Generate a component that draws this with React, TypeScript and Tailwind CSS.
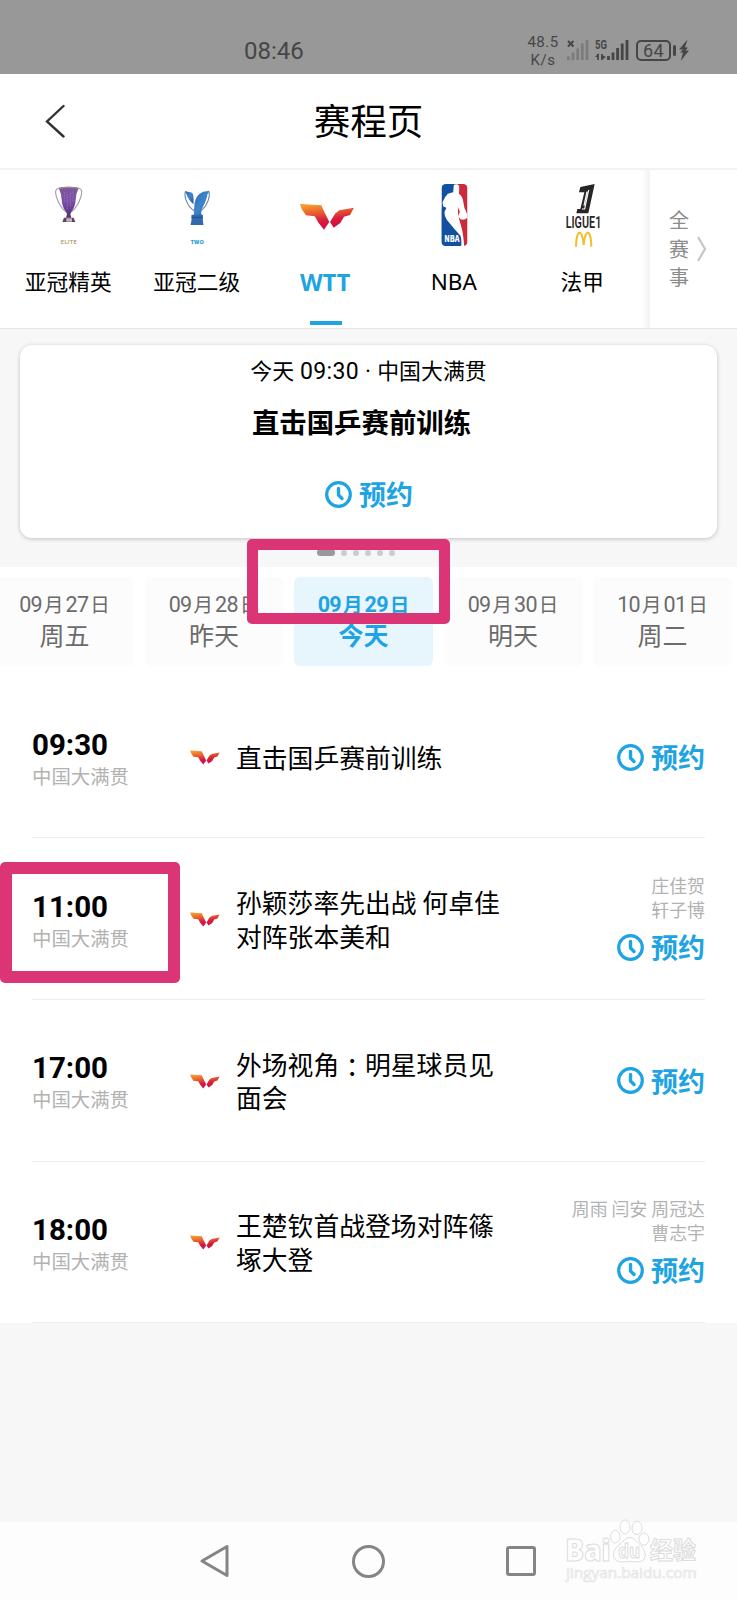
import type { ReactNode } from "react"

const tabs = [
  { label: "亚冠精英", icon: <EliteCup /> },
  { label: "亚冠二级", icon: <TwoCup /> },
  { label: "WTT", icon: <WttTabLogo />, active: true },
  { label: "NBA", icon: <NbaLogo /> },
  { label: "法甲", icon: <LigueLogo /> },
]

const days = [
  { month: "09", day: "27", name: "周五" },
  { month: "09", day: "28", name: "昨天" },
  { month: "09", day: "29", name: "今天", active: true },
  { month: "09", day: "30", name: "明天" },
  { month: "10", day: "01", name: "周二" },
]

const matches: { time: string; lines: ReactNode[]; hosts: string[] }[] = [
  { time: "09:30", lines: ["直击国乒赛前训练"], hosts: [] },
  { time: "11:00", lines: ["孙颖莎率先出战 何卓佳", "对阵张本美和"], hosts: ["庄佳贺", "轩子博"] },
  {
    time: "17:00",
    lines: [
      <>
        外场视角<span lang="zh-TW" className="relative top-[2px] font-['Noto_Sans_CJK_TC']">：</span>明星球员见
      </>,
      "面会",
    ],
    hosts: [],
  },
  { time: "18:00", lines: ["王楚钦首战登场对阵篠", "塚大登"], hosts: ["周雨 闫安 周冠达", "曹志宇"] },
]

function EliteCup() {
  return (
    <svg viewBox="78 45 252 210" className="h-[70px] w-[84px]">
      <defs>
        <linearGradient id="elite" x1="0" y1="0" x2="0" y2="1">
          <stop offset="0" stopColor="#7d5a9c" />
          <stop offset="0.5" stopColor="#7a4fa8" />
          <stop offset="1" stopColor="#4b2f6e" />
        </linearGradient>
      </defs>
      <path d="M176 70 Q162 72 169 94 Q178 126 200 142 M236 70 Q250 72 243 94 Q234 126 212 142" fill="none" stroke="#a79bb3" strokeWidth="3.500" />
      <path d="M176 69 Q206 62 236 69 Q228 84 227 105 Q226 126 214 140 L211 148 L214 158 H198 L201 148 L198 140 Q186 126 185 105 Q184 84 176 69Z" fill="url(#elite)" />
      <path d="M176 70 Q206 64 236 70" fill="none" stroke="#9c8390" strokeWidth="4" />
      <path d="M194 82 V112 M202 88 V132 M211 84 V126 M219 80 V112" stroke="#9b78c4" strokeWidth="2.500" strokeDasharray="4 4" />
      <path d="M192 158 H221 L226 171 H187Z" fill="#5a4462" />
      <path d="M199 160 H216 V170 H199Z" fill="#c9b6b4" />
      <text x="206" y="236" textAnchor="middle" textLength="49" lengthAdjust="spacingAndGlyphs" fontSize="16" fontWeight="700" fill="#bba97e">ELITE</text>
    </svg>
  )
}

function TwoCup() {
  return (
    <svg viewBox="463.5 45 252 210" className="h-[70px] w-[84px]">
      <defs>
        <linearGradient id="two" x1="0" y1="0" x2="1" y2="1">
          <stop offset="0" stopColor="#2d66ae" />
          <stop offset="0.5" stopColor="#3f86cc" />
          <stop offset="1" stopColor="#285596" />
        </linearGradient>
      </defs>
      <path d="M555 80 Q551 88 557 106 Q565 128 582 138 M625 80 Q629 88 623 106 Q615 128 600 138" fill="none" stroke="#6d86ad" strokeWidth="3.500" />
      <path d="M553 78 L575 83 Q581 92 579 118 Q563 104 559 90Z" fill="url(#two)" />
      <path d="M628 77 L608 80 Q585 90 582 117 Q580 140 580 150 H604 Q599 142 606 128 Q619 104 621 88Z" fill="url(#two)" />
      <path d="M573 149 H607 V166 L609 180 H570 L573 166Z" fill="#3169ad" />
      <path d="M573 157 H607" stroke="#224d88" strokeWidth="3" />
      <text x="590" y="236" textAnchor="middle" textLength="40" lengthAdjust="spacingAndGlyphs" fontSize="16" fontWeight="800" fill="#2b9fd0">TWO</text>
    </svg>
  )
}

function WttShape({ id }: { id: string }) {
  return (
    <>
      <defs>
        <linearGradient id={id} gradientUnits="userSpaceOnUse" x1="975" y1="115" x2="985" y2="192">
          <stop offset="0" stopColor="#f39a2c" />
          <stop offset="0.35" stopColor="#e8582f" />
          <stop offset="0.65" stopColor="#d81a3e" />
          <stop offset="1" stopColor="#d00f45" />
        </linearGradient>
      </defs>
      <path d="M900 117 L964 121 L973 141 L988 171 L972 194 L956 174 L944 154 L918 151 L905 132Z" fill={`url(#${id})`} />
      <path d="M1062 128 L1018 136 L1005 146 L990 171 L1001 188 L1021 174 L1032 155 L1050 150Z" fill={`url(#${id})`} />
    </>
  )
}

function WttTabLogo() {
  return (
    <svg viewBox="849 45 252 210" className="h-[70px] w-[84px]">
      <WttShape id="wtt" />
    </svg>
  )
}

function NbaLogo() {
  return (
    <svg viewBox="133.5 45 252 210" className="h-[70px] w-[84px]">
      <defs>
        <clipPath id="nba">
          <rect x="222" y="57" width="78" height="186" rx="13" />
        </clipPath>
      </defs>
      <g clipPath="url(#nba)">
        <rect x="222" y="57" width="40" height="186" fill="#1450a0" />
        <path d="M262 57 H300 V243 H282 Z" fill="#cc2a3a" />
        <path d="M240 130 L288 220 V243 H222 V130Z" fill="#1450a0" />
        <path d="M259 60 Q268 55 275 62 L275 78 L274 86 Q284 92 287 108 L291 130 Q295 136 297 143 Q301 150 299 158 Q292 167 279 163 L272 154 L277 140 L271 126 L271 150 Q278 172 284 195 Q289 220 290 243 H281 Q283 225 279 212 Q258 190 244 172 Q230 156 231 140 Q238 126 236 128 L227 124 L225 112 Q232 94 241 86 L257 82Z" fill="#fff" />
      </g>
      <text x="230" y="232" textLength="46" lengthAdjust="spacingAndGlyphs" fontSize="28" fontWeight="800" fill="#fff">NBA</text>
    </svg>
  )
}

function LigueLogo() {
  return (
    <svg viewBox="519 45 252 210" className="h-[70px] w-[84px]">
      <path d="M640 66 L683 57 L664 145 H628 L631 132 H640 L652 82 H636Z" fill="#262626" />
      <path d="M665 75 L653 132 H645 M660 80 L651 122" fill="none" stroke="#fff" strokeWidth="3.500" />
      <text x="596" y="188" textLength="107" lengthAdjust="spacingAndGlyphs" fontFamily="Roboto" fontSize="47" fontWeight="600" fill="#262626">LIGUE1</text>
      <path d="M627 245 C628 190 646 190 650 240 C654 190 672 190 673 245" fill="none" stroke="#eec02c" strokeWidth="6" />
    </svg>
  )
}

function ClockIcon() {
  return (
    <svg viewBox="0 0 27 27" className="size-[27px]" fill="none" stroke="#1ea3e3">
      <circle cx="13.500" cy="13.500" r="11.800" strokeWidth="3.200" />
      <path d="M13.500 7.500 V14 L17 17.500" strokeWidth="3.400" strokeLinecap="round" strokeLinejoin="round" />
    </svg>
  )
}

function Reserve() {
  return (
    <div className="flex items-center gap-[7px] text-[#1ea3e3]">
      <ClockIcon />
      <span className="text-[27px] leading-[30px] font-bold">预约</span>
    </div>
  )
}

function StatusBar() {
  return (
    <div className="flex h-[73.500px] items-start bg-[#989898] font-[Roboto] text-[#464646]">
      <span className="mt-[36px] ml-[244px] w-[60px] text-[24px] leading-[30px]">08:46</span>
      <div className="mt-[33px] ml-[222px] w-[34px] text-center text-[15px] leading-[18px] tracking-[0.500px]">
        <div>48.5</div>
        <div>K/s</div>
      </div>
      <svg viewBox="0 0 22 21" className="mt-[39px] ml-[7px] h-[21px] w-[22px]">
        <path d="M1 2 L6.500 7.500 M6.500 2 L1 7.500" stroke="#464646" strokeWidth="2" />
        <path d="M1.300 21 V17.500 M6 21 V13.500 M10.700 21 V9.500 M15.300 21 V4.500 M20 21 V1" stroke="#7b7b7b" strokeWidth="2.700" />
      </svg>
      <svg viewBox="0 0 34 21" className="mt-[39px] ml-[6px] h-[21px] w-[34px]" fill="#464646">
        <text x="0" y="9.500" fontSize="12" fontWeight="700" textLength="12" lengthAdjust="spacingAndGlyphs">5G</text>
        <path d="M3 21 V15 M7 15 V21" stroke="#464646" strokeWidth="1.700" />
        <path d="M0 18 L3.500 14 V18Z M6.500 21 V16 L11 18Z" />
        <path d="M13.500 21 V17 M18 21 V13.500 M22.600 21 V9 M27.200 21 V4.500 M32 21 V1" stroke="#464646" strokeWidth="2.800" />
      </svg>
      <div className="mt-[40px] ml-[7px] flex h-[21px] w-[35px] items-center justify-center rounded-[5px] border-2 border-[#464646] text-[18px] leading-none tracking-[0.500px]">64</div>
      <div className="mt-[45px] ml-[2px] h-[11px] w-[3px] rounded-sm bg-[#464646]" />
      <svg viewBox="0 0 10 22" className="mt-[39px] ml-[3px] h-[22px] w-[10px]" fill="#464646">
        <path d="M8.500 0.500 L0 10.500 H4 L1 13.500 H4 L1.800 22 L10 11.500 H6.500 L9 8.500 H6Z" />
      </svg>
    </div>
  )
}

function LeagueTabs() {
  return (
    <div className="flex h-[159px] border-b border-[#e4e4e4]">
      <div className="flex w-[643px] pl-[4px]">
        {tabs.map((tab) => (
          <div key={tab.label} className="flex w-[128.500px] shrink-0 flex-col items-center pt-[10px]">
            {tab.icon}
            <span
              className={
                tab.active
                  ? "mt-[17px] h-[30px] font-['Noto_Sans'] text-[23.500px] leading-[30px] font-bold text-[#1ea3e3]"
                  : "mt-[17px] h-[30px] font-['Noto_Sans','Noto_Sans_CJK_SC'] leading-[30px] " +
                    (tab.label === "NBA" ? "text-[22.500px]" : "text-[21.700px]")
              }
            >
              {tab.label}
            </span>
            {tab.active && <div className="mt-[24px] ml-[2px] h-[4px] w-8 bg-[#1ea3e3]" />}
          </div>
        ))}
      </div>
      <div className="w-[7px] bg-gradient-to-r from-[#fdfdfd] to-[#f2f2f2]" />
      <div className="flex flex-1 items-center pl-[19px]">
        <div className="w-5 text-[20px] leading-[28.700px] text-[#8c8c8c]">全赛事</div>
        <svg viewBox="0 0 10 26" className="ml-[8px] h-[26px] w-[10px]" fill="none" stroke="#c6c6c6" strokeWidth="2.200">
          <path d="M1 1 L8 13 L1 25" />
        </svg>
      </div>
    </div>
  )
}

export default function App() {
  return (
    <div className="relative flex h-[1600px] w-[737px] flex-col overflow-hidden bg-white font-['Noto_Sans_CJK_SC',sans-serif] text-black">
      <StatusBar />

      <header className="relative flex h-[96.500px] items-center justify-center border-b-2 border-[#f2f2f2] pb-px">
        <svg viewBox="0 0 20 34" className="absolute top-[30px] left-[45px] h-[34px] w-[20px]" fill="none" stroke="#333" strokeWidth="2.400" strokeLinecap="round">
          <path d="M18.500 2 L2 17.500 L18.500 32.500" />
        </svg>
        <h1 className="text-[36.600px] leading-[50px]">赛程页</h1>
      </header>

      <LeagueTabs />

      <section className="h-[238px] bg-[#f7f7f7] px-5 pt-[16px]">
        <div className="flex h-[193px] flex-col items-center rounded-xl bg-white pt-[9px] shadow-[0_1px_4px_rgba(0,0,0,0.22)]">
          <div className="text-[21.900px] leading-[32px] whitespace-pre">
            今天<span className="font-[Roboto] text-[23px] tracking-[0.300px]"> 09:30 · </span>中国大满贯
          </div>
          <div className="mt-[15px] mr-[14px] text-[27.400px] leading-[36px] font-bold">直击国乒赛前训练</div>
          <div className="mt-[40px] ml-px">
            <Reserve />
          </div>
        </div>
        <div className="mt-[11px] flex items-center justify-center gap-[6px] pr-[26px]">
          <div className="ml-[1px] h-[7px] w-[18px] rounded-full bg-[#999]" />
          {[0, 1, 2, 3, 4].map((dot) => (
            <div key={dot} className="size-[6px] rounded-full bg-[#ccc]" />
          ))}
        </div>
      </section>

      <div className="-ml-[5px] flex h-[109.500px] w-[760px] gap-[10.500px] pt-[10px]">
        {days.map((d) => (
          <div
            key={d.name}
            className={
              "flex h-[88.500px] w-[139px] flex-col items-center rounded-md pt-[11px] " +
              (d.active ? "bg-[#e7f5fd] font-bold text-[#1ea3e3]" : "bg-[#fcfcfc] text-[#6b6b6b]")
            }
          >
            <div className="flex gap-[2px] text-[19.500px] leading-[31px]">
              <span className="pt-px font-[Roboto] text-[21.500px] tracking-[-0.700px]">{d.month}</span>月
              <span className="pt-px font-[Roboto] text-[21.500px] tracking-[-0.700px]">{d.day}</span>日
            </div>
            <div className="-mt-[2px] text-[25px] leading-[32px]">{d.name}</div>
          </div>
        ))}
      </div>

      <main>
        {matches.map((m) => (
          <div key={m.time} className="mx-8 flex h-[161.700px] items-center border-b border-[#ececec]">
            <div className="mt-[4px] w-[158px]">
              <div className="pt-px font-[Roboto] text-[29.500px] leading-[34px] font-bold">{m.time}</div>
              <div className="-mt-px text-[19.400px] leading-[30px] text-[#b2b2b2]">中国大满贯</div>
            </div>
            <svg viewBox="899 115 165 80" className="mt-[2px] h-[15px] w-[30px]">
              <WttShape id={"wtt-" + m.time.slice(0, 2)} />
            </svg>
            <div className="ml-[16px] flex-1 text-[25.800px] leading-[33.600px] whitespace-pre">
              {m.lines.map((line, i) => (
                <div key={i}>{line}</div>
              ))}
            </div>
            <div className="mt-px flex flex-col items-end">
              {m.hosts.length > 0 && (
                <div className="-mt-[3px] mb-[11px] text-right text-[17.900px] leading-[24px] text-[#b2b2b2]">
                  {m.hosts.map((h) => (
                    <div key={h}>{h}</div>
                  ))}
                </div>
              )}
              <Reserve />
            </div>
          </div>
        ))}
      </main>

      <div className="flex-1 bg-[#f7f7f7]" />

      <nav className="relative h-[78px] bg-[#fdfdfd]">
        <div className="flex h-full items-center pl-[199px] text-[#858585]">
          <svg viewBox="0 0 32 34" className="h-[34px] w-[32px]" fill="none" stroke="currentColor" strokeWidth="3" strokeLinejoin="round">
            <path d="M28 2.500 V31.500 L3 17Z" />
          </svg>
          <div className="ml-[121px] size-[33px] rounded-full border-3 border-current" />
          <div className="ml-[121px] size-[30px] rounded-[3px] border-3 border-current" />
        </div>
        <div className="absolute top-[-3px] left-[564px] w-[140px]">
          <svg viewBox="590 118 400 195" className="h-[65px] w-[133.300px]" fill="#fefefe" stroke="#dcdcdc" strokeWidth="3">
            <text x="594" y="244" fontFamily="Open Sans" fontSize="88" fontWeight="800" textLength="136" lengthAdjust="spacingAndGlyphs">Bai</text>
            <ellipse cx="744" cy="171" rx="14" ry="19" />
            <ellipse cx="773" cy="142" rx="15" ry="21" />
            <ellipse cx="809" cy="145" rx="15" ry="20" />
            <ellipse cx="830" cy="178" rx="15" ry="18" />
            <path d="M788 173 Q800 173 810 188 Q832 205 834 226 Q832 248 808 247 Q788 243 768 247 Q741 248 738 226 Q740 205 762 190 Q774 173 788 173Z" />
            <text x="753" y="236" fontFamily="Open Sans" fontSize="56" fontWeight="700" textLength="66" lengthAdjust="spacingAndGlyphs">du</text>
            <text x="848" y="239" fontFamily="Noto Sans CJK SC" fontSize="70" fontWeight="700" textLength="138" lengthAdjust="spacingAndGlyphs">经验</text>
            <text x="596" y="296" fontFamily="Open Sans" fontSize="42" textLength="392" lengthAdjust="spacingAndGlyphs" stroke="#e4e4e4" strokeWidth="2">jingyan.baidu.com</text>
          </svg>
        </div>
      </nav>

      {/* annotation frames */}
      <div className="absolute top-[539px] left-[247px] h-[85px] w-[203px] rounded-[5px] border-[11.500px] border-[#db3575]" />
      <div className="absolute top-[862px] left-0 h-[121px] w-[179.500px] rounded-[5px] border-[12px] border-[#db3575]" />
    </div>
  )
}
